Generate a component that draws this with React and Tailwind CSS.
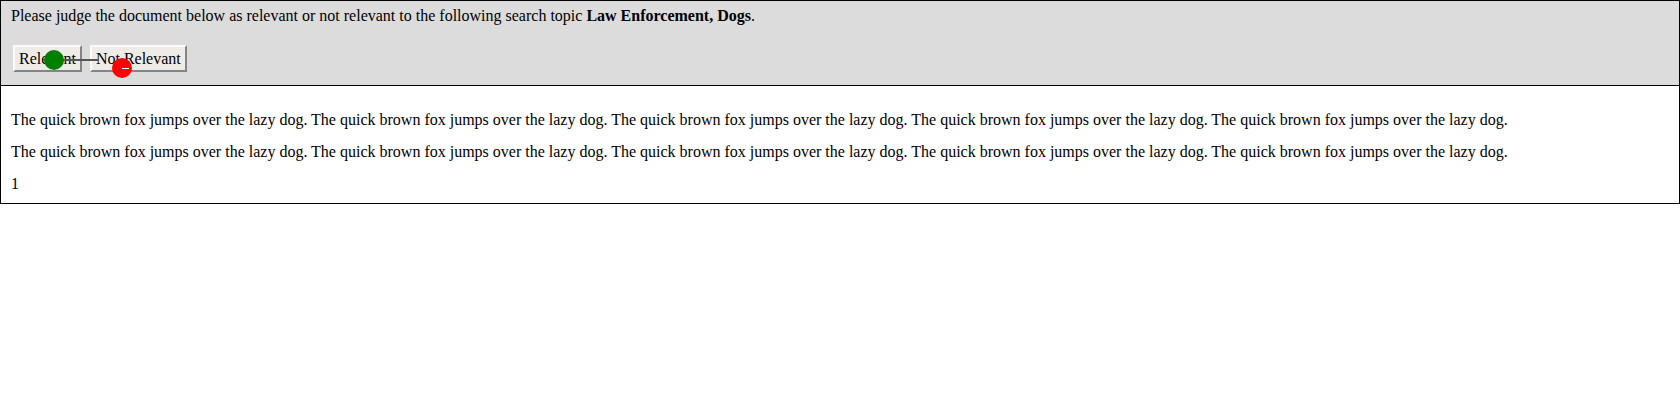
import React from "react";

const sentence = "The quick brown fox jumps over the lazy dog.";
const line = Array(5).fill(sentence).join(" ");

const Button = ({ children }) => (
  <button
    type="button"
    className="h-[27px] px-[4px] bg-[#efece8] text-black leading-[18px] border-2 border-t-[#fbfbfb] border-l-[#fbfbfb] border-r-[#858585] border-b-[#858585]"
  >
    {children}
  </button>
);

export default function App() {
  return (
    <div className="text-black text-[16px] leading-[18px]" style={{ fontFamily: '"Liberation Serif", "Times New Roman", serif' }}>
      <div className="border border-black">
        {/* TOPIC + JUDGEMENT BUTTONS */}
        <div className="relative bg-[#dcdcdc] border-b border-black pt-[6px] pb-[13px] px-[10px]">
          <p>
            Please judge the document below as relevant or not relevant to the following search topic{" "}
            <b>Law Enforcement, Dogs</b>.
          </p>
          <div className="flex gap-[8px] mt-[20px] ml-[2px]">
            <Button>Relevant</Button>
            <Button>Not Relevant</Button>
          </div>

          {/* cursor trail overlay */}
          <div className="absolute left-[53px] top-[58px] w-[45px] h-[2px] bg-[#555]" />
          <div className="absolute left-[43px] top-[49px] w-[20px] h-[20px] rounded-full bg-[#008000]" />
          <div className="absolute left-[111px] top-[57px] w-[20px] h-[20px] rounded-full bg-[#ff0000]">
            <div className="absolute left-[10px] top-[10px] w-[7px] h-[1px] bg-white" />
          </div>
        </div>

        {/* DOCUMENT */}
        <div className="px-[10px] pt-[25px] pb-[10px]">
          <p>{line}</p>
          <p className="mt-[14px]">{line}</p>
          <p className="mt-[14px]">1</p>
        </div>
      </div>
    </div>
  );
}
